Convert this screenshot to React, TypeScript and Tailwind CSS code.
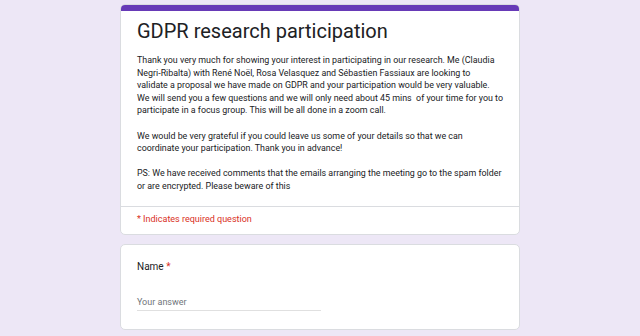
export default function App() {
  return (
    <div className="min-h-[336px] bg-[#ede7f6] pt-[4px] font-['Roboto',sans-serif] text-[#202124]">
      <div className="mx-auto flex w-[400px] flex-col gap-[9px]">
        <div className="overflow-hidden rounded-[5px] border border-[#dadce0] bg-white">
          <div className="h-[6px] bg-[#673ab7]" />
          <div className="px-[16px] pt-[6px] pb-[13px]">
            <h1 className="text-[20px] leading-[28px] font-normal">GDPR research participation</h1>
            <div className="mt-[9px] text-[8.9px] leading-[12.6px] whitespace-pre-wrap">
              Thank you very much for showing your interest in participating in our research. Me (Claudia Negri-Ribalta) with René Noël, Rosa Velasquez and Sébastien Fassiaux are looking to validate a proposal we have made on GDPR and your participation would be very valuable. We will send you a few questions and we will only need about 45 mins  of your time for you to participate in a focus group. This will be all done in a zoom call.
              {"\n\n"}We would be very grateful if you could leave us some of your details so that we can coordinate your participation. Thank you in advance!
              {"\n\n"}PS: We have received comments that the emails arranging the meeting go to the spam folder or are encrypted. Please beware of this
            </div>
          </div>
          <div className="border-t border-[#dadce0] px-[16px] pt-[6px] pb-[8px] text-[9px] leading-[13px] text-[#d93025]">
            * Indicates required question
          </div>
        </div>

        <div className="rounded-[5px] border border-[#dadce0] bg-white px-[16px] pt-[15px] pb-[18px]">
          <div className="text-[10px] leading-[14px]">
            Name <span className="text-[#d93025]">*</span>
          </div>
          <div className="mt-[22px] w-[184px] border-b border-[#e0e0e0] pb-[2px] text-[9px] leading-[12px] text-[#70757a]">
            Your answer
          </div>
        </div>
      </div>
    </div>
  );
}
